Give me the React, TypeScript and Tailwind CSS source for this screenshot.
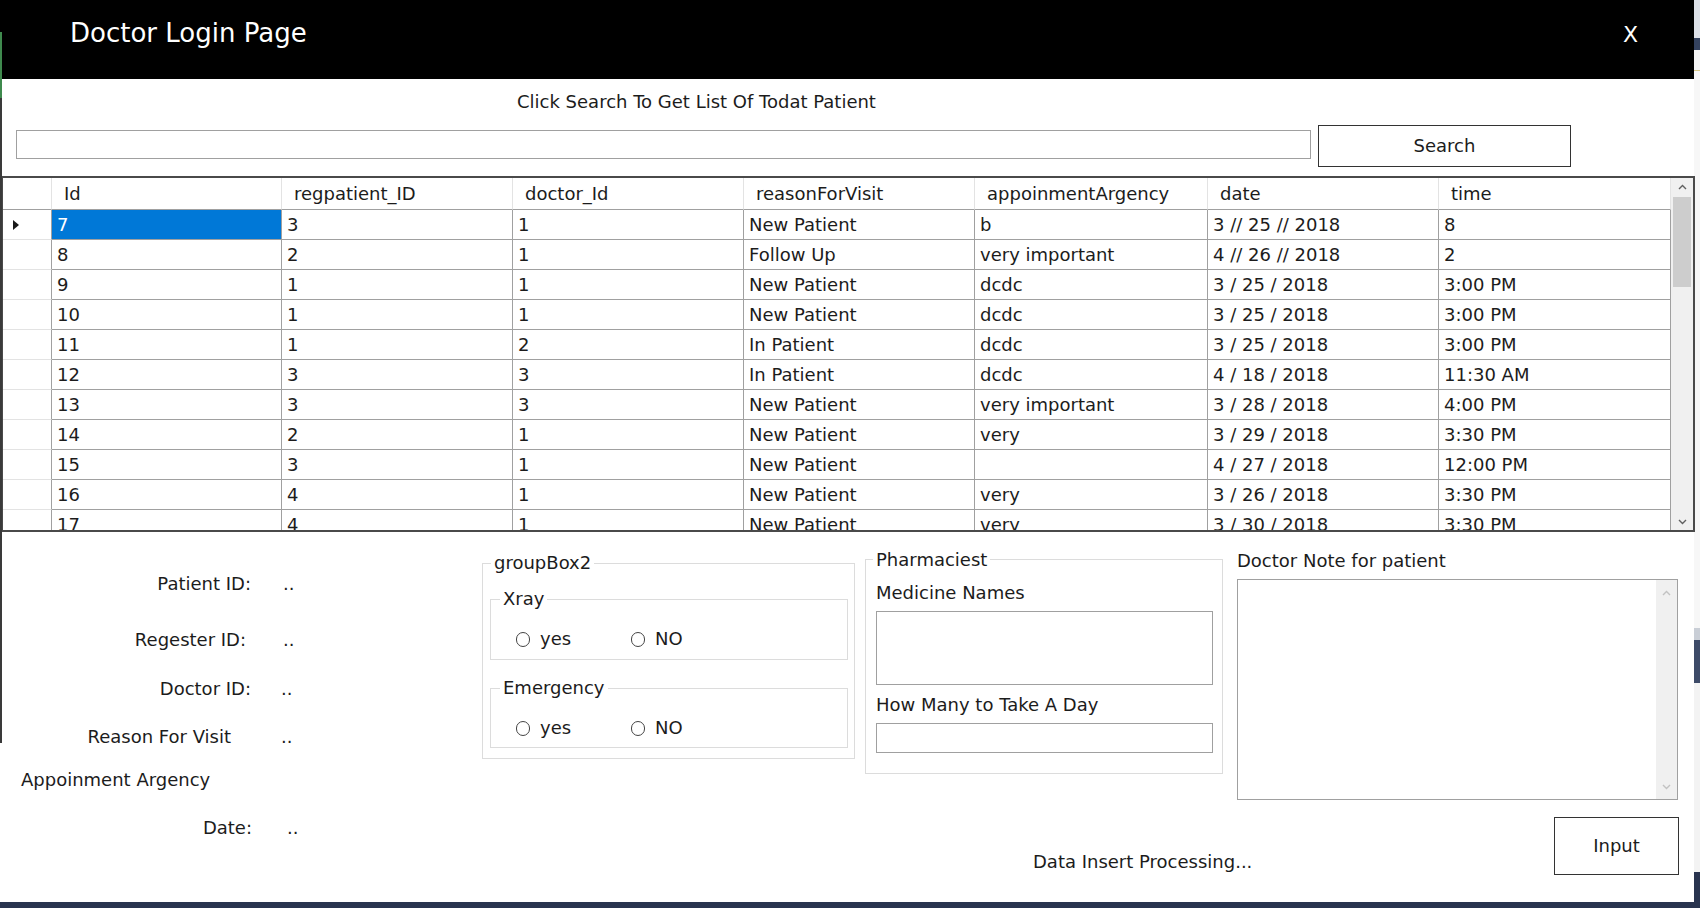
import React from "react";

type Col = { name: string; w: string };

const cols: Col[] = [
  { name: "Id", w: "w-[230px]" },
  { name: "regpatient_ID", w: "w-[231px]" },
  { name: "doctor_Id", w: "w-[231px]" },
  { name: "reasonForVisit", w: "w-[231px]" },
  { name: "appoinmentArgency", w: "w-[233px]" },
  { name: "date", w: "w-[231px]" },
  { name: "time", w: "w-[232px]" },
];

const rows: string[][] = [
  ["7", "3", "1", "New Patient", "b", "3 // 25 // 2018", "8"],
  ["8", "2", "1", "Follow Up", "very important", "4 // 26 // 2018", "2"],
  ["9", "1", "1", "New Patient", "dcdc", "3 / 25 / 2018", "3:00 PM"],
  ["10", "1", "1", "New Patient", "dcdc", "3 / 25 / 2018", "3:00 PM"],
  ["11", "1", "2", "In Patient", "dcdc", "3 / 25 / 2018", "3:00 PM"],
  ["12", "3", "3", "In Patient", "dcdc", "4 / 18 / 2018", "11:30 AM"],
  ["13", "3", "3", "New Patient", "very important", "3 / 28 / 2018", "4:00 PM"],
  ["14", "2", "1", "New Patient", "very", "3 / 29 / 2018", "3:30 PM"],
  ["15", "3", "1", "New Patient", "", "4 / 27 / 2018", "12:00 PM"],
  ["16", "4", "1", "New Patient", "very", "3 / 26 / 2018", "3:30 PM"],
  ["17", "4", "1", "New Patient", "very", "3 / 30 / 2018", "3:30 PM"],
];

function ChevronUp({ color }: { color: string }) {
  return (
    <svg width="9" height="6" viewBox="0 0 9 6">
      <path d="M1 5 L4.5 1.5 L8 5" fill="none" stroke={color} strokeWidth="1.4" />
    </svg>
  );
}

function ChevronDown({ color }: { color: string }) {
  return (
    <svg width="9" height="6" viewBox="0 0 9 6">
      <path d="M1 1 L4.5 4.5 L8 1" fill="none" stroke={color} strokeWidth="1.4" />
    </svg>
  );
}

function Radio({ label, w }: { label: string; w: string }) {
  return (
    <div className={`flex items-center ${w}`}>
      <div className="w-[14px] h-[15px] rounded-full border border-[#444]" />
      <span className="ml-[10px]">{label}</span>
    </div>
  );
}

function DataGrid() {
  return (
    <div className="mt-[9px] ml-[1px] flex w-[1694px] h-[356px] border-2 border-[#4a4a4a] overflow-hidden">
      <div className="flex flex-col w-[1668px] overflow-hidden">
        <div className="flex h-[32px] shrink-0">
          <div className="w-[49px] border-r border-b border-r-[#e3e3e3] border-b-[#a0a0a0]" />
          {cols.map((c) => (
            <div
              key={c.name}
              className={`${c.w} flex items-center pl-[12px] border-r border-b border-r-[#e3e3e3] border-b-[#a0a0a0]`}
            >
              {c.name}
            </div>
          ))}
        </div>
        {rows.map((r, i) => (
          <div key={r[0]} className="flex h-[30px] shrink-0">
            <div className="w-[49px] flex items-center pl-[10px] border-r border-b border-r-[#a0a0a0] border-b-[#e3e3e3]">
              {i === 0 && (
                <svg width="6" height="10" viewBox="0 0 6 10">
                  <path d="M0 0 L6 5 L0 10 Z" fill="#1a1a1a" />
                </svg>
              )}
            </div>
            {r.map((v, j) => (
              <div
                key={j}
                className={`${cols[j].w} pl-[5px] leading-[29px] border-r border-b border-[#a0a0a0] ${
                  i === 0 && j === 0 ? "bg-[#0078d7] text-white" : ""
                }`}
              >
                {v}
              </div>
            ))}
          </div>
        ))}
      </div>
      <div className="flex flex-col w-[22px] bg-[#f0f0f0]">
        <div className="h-[17px] flex items-center justify-center">
          <ChevronUp color="#606060" />
        </div>
        <div className="mt-[2px] mx-[2px] h-[90px] bg-[#cdcdcd]" />
        <div className="flex-1" />
        <div className="h-[17px] flex items-center justify-center">
          <ChevronDown color="#606060" />
        </div>
      </div>
    </div>
  );
}

function Labels() {
  return (
    <div className="flex flex-col w-[482px]">
      <div className="flex mt-[41px] h-[22px]">
        <span className="w-[251px] text-right">Patient ID:</span>
        <span className="ml-[32px]">..</span>
      </div>
      <div className="flex mt-[34px] h-[22px]">
        <span className="w-[246px] text-right">Regester ID:</span>
        <span className="ml-[37px]">..</span>
      </div>
      <div className="flex mt-[27px] h-[22px]">
        <span className="w-[251px] text-right">Doctor ID:</span>
        <span className="ml-[30px]">..</span>
      </div>
      <div className="flex mt-[26px] h-[22px]">
        <span className="w-[231px] text-right">Reason For Visit</span>
        <span className="ml-[50px]">..</span>
      </div>
      <div className="flex mt-[21px] h-[22px] pl-[21px]">
        <span>Appoinment Argency</span>
      </div>
      <div className="flex mt-[26px] h-[22px]">
        <span className="w-[252px] text-right">Date:</span>
        <span className="ml-[35px]">..</span>
      </div>
    </div>
  );
}

function RightPart() {
  return (
    <div className="flex flex-col w-[1212px]">
      <div className="flex items-start h-[268px]">
        {/* groupBox2 */}
        <div className="relative mt-[31px] w-[373px] h-[196px] border border-[#dcdcdc]">
          <span className="absolute left-[8px] top-[-12px] px-[3px] bg-white leading-[22px]">groupBox2</span>
          <div className="relative mt-[35px] ml-[7px] w-[358px] h-[61px] border border-[#dcdcdc]">
            <span className="absolute left-[9px] top-[-12px] px-[3px] bg-white leading-[22px]">Xray</span>
            <div className="flex items-center mt-[28px] ml-[25px] h-[22px]">
              <Radio label="yes" w="w-[115px]" />
              <Radio label="NO" w="w-[80px]" />
            </div>
          </div>
          <div className="relative mt-[28px] ml-[7px] w-[358px] h-[60px] border border-[#dcdcdc]">
            <span className="absolute left-[9px] top-[-12px] px-[3px] bg-white leading-[22px]">Emergency</span>
            <div className="flex items-center mt-[28px] ml-[25px] h-[22px]">
              <Radio label="yes" w="w-[115px]" />
              <Radio label="NO" w="w-[80px]" />
            </div>
          </div>
        </div>
        {/* Pharmaciest */}
        <div className="relative ml-[10px] mt-[27px] w-[358px] h-[215px] border border-[#dcdcdc] px-[10px]">
          <span className="absolute left-[7px] top-[-11px] px-[3px] bg-white leading-[22px]">Pharmaciest</span>
          <div className="mt-[22px]">Medicine Names</div>
          <div className="mt-[7px] w-[337px] h-[74px] border border-[#a0a0a0]" />
          <div className="mt-[9px]">How Many to Take A Day</div>
          <div className="mt-[7px] w-[337px] h-[30px] border border-[#a0a0a0]" />
        </div>
        {/* Doctor note */}
        <div className="ml-[14px] mt-[18px] w-[441px] flex flex-col">
          <div>Doctor Note for patient</div>
          <div className="mt-[7px] h-[221px] border border-[#a0a0a0] flex justify-end">
            <div className="w-[21px] h-full bg-[#f0f0f0] flex flex-col items-center justify-between pt-[10px] pb-[9px]">
              <ChevronUp color="#c2c2c2" />
              <ChevronDown color="#c2c2c2" />
            </div>
          </div>
        </div>
      </div>
      <div className="flex items-start mt-[17px]">
        <div className="ml-[551px] mt-[34px]">Data Insert Processing...</div>
        <div className="ml-auto mr-[15px] w-[125px] h-[58px] border border-[#333] flex items-center justify-center">
          Input
        </div>
      </div>
    </div>
  );
}

export default function App() {
  return (
    <div className="flex flex-col w-[1700px] h-[908px] overflow-hidden bg-white font-['DejaVu_Sans',sans-serif] text-[18px] leading-[22px] text-[#1c1c1c]">
      <div className="flex h-[902px]">
        <div className="relative flex flex-col w-[1694px] h-[902px] bg-white">
          <div className="flex items-start h-[79px] bg-black text-white shrink-0">
            <div className="pl-[70px] pt-[17px] text-[26px] leading-[32px]">Doctor Login Page</div>
            <div className="ml-auto mr-[56px] pt-[22px] text-[22px] leading-[26px]">X</div>
          </div>
          <div className="mt-[12px] pl-[517px]">Click Search To Get List Of Todat Patient</div>
          <div className="mt-[12px] flex items-start h-[42px]">
            <div className="ml-[16px] mt-[5px] w-[1295px] h-[29px] border border-[#a0a0a0]" />
            <div className="ml-[7px] w-[253px] h-[42px] border border-[#333] flex items-center justify-center">
              Search
            </div>
          </div>
          <DataGrid />
          <div className="flex flex-1">
            <Labels />
            <RightPart />
          </div>
          {/* window frame decorations */}
          <div className="absolute left-0 top-[79px] h-[664px] w-[2px] bg-[#3a3a3a]" />
          <div className="absolute left-0 top-[32px] h-[66px] w-[2px] bg-[#3f8a4e]" />
        </div>
        <div className="flex flex-col w-[6px] h-[902px]">
          <div className="h-[38px] bg-[#dde1e8]" />
          <div className="h-[12px] bg-[#34425f]" />
          <div className="h-[20px] bg-[#f4f4f4]" />
          <div className="h-[1px] bg-[#d8c98a]" />
          <div className="h-[557px] bg-[#f7f7f7]" />
          <div className="h-[12px] bg-[#c9ced6]" />
          <div className="h-[43px] bg-[#3d4b68]" />
          <div className="h-[189px] bg-[#f3f3f3]" />
          <div className="flex-1 bg-[#29344f]" />
        </div>
      </div>
      <div className="h-[6px] bg-[#29344f]" />
    </div>
  );
}
